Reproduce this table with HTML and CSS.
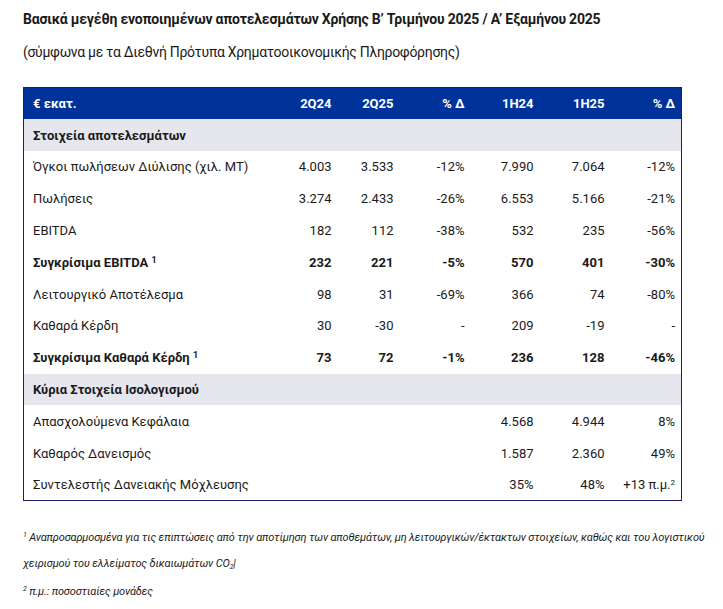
FILE: index.html
```html
<!DOCTYPE html>
<html lang="el">
<head>
<meta charset="utf-8">
<link rel="stylesheet" href="styles.css">
</head>
<body>
<div class="page">
  <h1 class="title">Βασικά μεγέθη ενοποιημένων αποτελεσμάτων Χρήσης Β’ Τριμήνου 2025 / Α’ Εξαμήνου 2025</h1>
  <p class="subtitle">(σύμφωνα με τα Διεθνή Πρότυπα Χρηματοοικονομικής Πληροφόρησης)</p>
  <table class="fin">
    <colgroup>
      <col class="c-label"><col class="c-a"><col class="c-b"><col class="c-c"><col class="c-d"><col class="c-e"><col class="c-f">
    </colgroup>
    <thead>
      <tr class="head"><th class="lbl">€ εκατ.</th><th>2Q24</th><th>2Q25</th><th>% Δ</th><th>1H24</th><th>1H25</th><th>% Δ</th></tr>
    </thead>
    <tbody>
      <tr class="section"><td class="lbl" colspan="7">Στοιχεία αποτελεσμάτων</td></tr>
      <tr><td class="lbl">Όγκοι πωλήσεων Διύλισης (χιλ. ΜΤ)</td><td>4.003</td><td>3.533</td><td>-12%</td><td>7.990</td><td>7.064</td><td>-12%</td></tr>
      <tr><td class="lbl">Πωλήσεις</td><td>3.274</td><td>2.433</td><td>-26%</td><td>6.553</td><td>5.166</td><td>-21%</td></tr>
      <tr><td class="lbl">EBITDA</td><td>182</td><td>112</td><td>-38%</td><td>532</td><td>235</td><td>-56%</td></tr>
      <tr class="strong"><td class="lbl">Συγκρίσιμα EBITDA <sup>1</sup></td><td>232</td><td>221</td><td>-5%</td><td>570</td><td>401</td><td>-30%</td></tr>
      <tr><td class="lbl">Λειτουργικό Αποτέλεσμα</td><td>98</td><td>31</td><td>-69%</td><td>366</td><td>74</td><td>-80%</td></tr>
      <tr><td class="lbl">Καθαρά Κέρδη</td><td>30</td><td>-30</td><td>-</td><td>209</td><td>-19</td><td>-</td></tr>
      <tr class="strong"><td class="lbl">Συγκρίσιμα Καθαρά Κέρδη <sup>1</sup></td><td>73</td><td>72</td><td>-1%</td><td>236</td><td>128</td><td>-46%</td></tr>
      <tr class="section"><td class="lbl" colspan="7">Κύρια Στοιχεία Ισολογισμού</td></tr>
      <tr><td class="lbl">Απασχολούμενα Κεφάλαια</td><td></td><td></td><td></td><td>4.568</td><td>4.944</td><td>8%</td></tr>
      <tr><td class="lbl">Καθαρός Δανεισμός</td><td></td><td></td><td></td><td>1.587</td><td>2.360</td><td>49%</td></tr>
      <tr><td class="lbl">Συντελεστής Δανειακής Μόχλευσης</td><td></td><td></td><td></td><td>35%</td><td>48%</td><td>+13 π.μ.<sup class="small">2</sup></td></tr>
    </tbody>
  </table>
  <div class="notes">
    <p class="note"><sup>1</sup> Αναπροσαρμοσμένα για τις επιπτώσεις από την αποτίμηση των αποθεμάτων, μη λειτουργικών/έκτακτων στοιχείων, καθώς και του λογιστικού χειρισμού του ελλείματος δικαιωμάτων CO<sub>2</sub>|</p>
    <p class="note"><sup>2</sup> π.μ.: ποσοστιαίες μονάδες</p>
  </div>
</div>
</body>
</html>
```

FILE: styles.css
```css
* { box-sizing: border-box; }
html, body { margin: 0; padding: 0; background: #ffffff; }
body {
  font-family: Roboto, "Noto Sans", "DejaVu Sans", sans-serif;
  color: #1a1a1a;
}
.page { padding: 10px 0 0 23px; width: 723px; }
.title {
  margin: 0;
  font-size: 14px;
  font-weight: 700;
  line-height: 18px;
  letter-spacing: -0.2px;
}
.subtitle {
  margin: 15px 0 0;
  font-size: 14px;
  line-height: 18px;
  letter-spacing: -0.3px;
}
.fin {
  margin-top: 26px;
  width: 658px;
  border-collapse: collapse;
  table-layout: fixed;
  border: 1px solid #1d1d6f;
  font-size: 13px;
}
.c-label { width: 252px; }
.c-a { width: 62px; }
.c-b { width: 62px; }
.c-c { width: 71px; }
.c-d { width: 69px; }
.c-e { width: 71px; }
.c-f { width: 71px; }
.fin th, .fin td {
  height: 31.8px;
  padding: 0 6px 0 0;
  text-align: right;
  vertical-align: middle;
  white-space: nowrap;
}
.fin .lbl { text-align: left; padding-left: 9px; }
.head th { background: #003399; color: #ffffff; font-weight: 700; }
.section td { background: #e6e6ee; font-weight: 700; }
.strong td { font-weight: 700; }
sup { font-size: 9px; vertical-align: 4px; line-height: 0; }
sup.small { font-size: 8px; }
.notes { margin-top: 24px; padding-right: 10px; }
.note {
  margin: 0 0 2px;
  font-size: 11px;
  font-style: italic;
  line-height: 26px;
  letter-spacing: -0.15px;
}
.note sup { font-size: 7px; vertical-align: baseline; position: relative; top: -4px; }
.note sub { font-size: 7px; vertical-align: baseline; position: relative; top: 2px; line-height: 0; }
```
